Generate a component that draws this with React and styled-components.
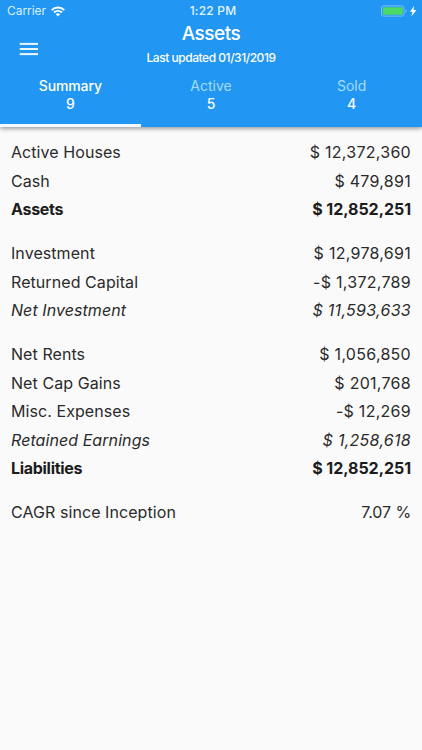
import React from 'react';
import styled, { createGlobalStyle } from 'styled-components';

const GlobalStyle = createGlobalStyle`
  * {
    box-sizing: border-box;
  }

  body {
    margin: 0;
    background-color: #fafafa;
    font-family: Inter, "Liberation Sans", sans-serif;
    color: #212121;
  }
`;

const Screen = styled.div`
  min-height: 750px;
  background-color: #fafafa;
`;

const Header = styled.header`
  display: flex;
  flex-direction: column;
  height: 127px;
  background-color: #2196f3;
  color: #fff;
  box-shadow: 0 1px 4px rgba(0, 0, 0, 0.28), 0 2px 5px rgba(0, 0, 0, 0.18);
`;

const StatusBar = styled.div`
  display: grid;
  grid-template-columns: 1fr auto 1fr;
  align-items: center;
  height: 22px;
  padding: 0 5px 0 7px;
`;

const Carrier = styled.div`
  display: flex;
  align-items: center;
  gap: 5px;
  font-size: 12px;
  line-height: 22px;
  letter-spacing: -0.05px;
  color: #d9f0ff;
`;

const Clock = styled.div`
  padding-left: 2px;
  font-size: 12px;
  font-weight: 500;
  line-height: 22px;
  letter-spacing: 0.2px;
  color: #e3f4ff;
`;

const Battery = styled.div`
  display: flex;
  justify-content: flex-end;
`;

const Toolbar = styled.div`
  display: grid;
  grid-template-columns: 1fr auto 1fr;
  height: 48px;
`;

const MenuButton = styled.button`
  justify-self: start;
  height: 19px;
  margin: 19px 0 0 19px;
  padding: 0;
  border: none;
  background: none;
`;

const Heading = styled.div`
  text-align: center;
`;

const Title = styled.h1`
  margin: 0;
  font-size: 19px;
  font-weight: 500;
  line-height: 24px;
  letter-spacing: -0.5px;
`;

const Subtitle = styled.div`
  font-size: 12px;
  font-weight: 500;
  line-height: 23px;
  letter-spacing: -0.46px;
`;

const Tabs = styled.nav`
  display: grid;
  grid-template-columns: repeat(3, 1fr);
  flex: 1;
`;

const Tab = styled.div`
  padding-top: 7px;
  border-bottom: 3px solid ${props => (props.$active ? '#f1f8fe' : 'transparent')};
  text-align: center;
  font-size: 14px;
  font-weight: 500;
  line-height: 17.5px;
`;

const TabLabel = styled.div`
  color: ${props => (props.$active ? '#fff' : '#a5dcfc')};
  font-weight: ${props => (props.$active ? 500 : 400)};
  letter-spacing: ${props => (props.$active ? '-0.1px' : '0')};
`;

const Content = styled.main`
  padding: 11px 11px 0;
`;

const Section = styled.section`
  margin-bottom: 15.5px;
`;

const Row = styled.div`
  display: flex;
  justify-content: space-between;
  height: 28.5px;
  font-size: 16px;
  line-height: 28.5px;
  color: ${props => (props.$kind === 'total' ? '#1c1c1c' : '#2a2a2a')};
  font-weight: ${props => (props.$kind === 'total' ? 700 : 400)};
  font-style: ${props => (props.$kind === 'subtotal' ? 'italic' : 'normal')};
`;

const RowLabel = styled.span`
  letter-spacing: ${props => (props.$kind === 'total' ? '-0.3px' : '0.07px')};
`;

const RowValue = styled.span`
  letter-spacing: ${props => (props.$kind === 'total' ? '-0.05px' : props.$kind === 'ratio' ? '-0.1px' : '0.28px')};
`;

const tabs = [
  { label: 'Summary', count: 9 },
  { label: 'Active', count: 5 },
  { label: 'Sold', count: 4 },
];

const sections = [
  [
    { label: 'Active Houses', value: '$ 12,372,360' },
    { label: 'Cash', value: '$ 479,891' },
    { label: 'Assets', value: '$ 12,852,251', kind: 'total' },
  ],
  [
    { label: 'Investment', value: '$ 12,978,691' },
    { label: 'Returned Capital', value: '-$ 1,372,789' },
    { label: 'Net Investment', value: '$ 11,593,633', kind: 'subtotal' },
  ],
  [
    { label: 'Net Rents', value: '$ 1,056,850' },
    { label: 'Net Cap Gains', value: '$ 201,768' },
    { label: 'Misc. Expenses', value: '-$ 12,269' },
    { label: 'Retained Earnings', value: '$ 1,258,618', kind: 'subtotal' },
    { label: 'Liabilities', value: '$ 12,852,251', kind: 'total' },
  ],
  [
    { label: 'CAGR since Inception', value: '7.07 %', kind: 'ratio' },
  ],
];

const WifiIcon = () => (
  <svg width="14" height="11" viewBox="0 0 14 11" fill="none" stroke="#fff" strokeWidth="1.9">
    <path d="M0.7 4.1a8.9 8.9 0 0 1 12.6 0" />
    <path d="M3 6.5a5.7 5.7 0 0 1 8 0" />
    <path d="M7 10.5L4.8 8.3a3.1 3.1 0 0 1 4.4 0z" fill="#fff" stroke="none" />
  </svg>
);

const BatteryIcon = () => (
  <svg width="37" height="12" viewBox="0 0 37 12">
    <rect x="1.5" y="0.9" width="22.6" height="10.2" rx="2" fill="none" stroke="#7cc0f8" />
    <rect x="2.8" y="2.2" width="20" height="7.6" rx="0.8" fill="#4cd964" />
    <path d="M25.5 4.2c1.6 0.6 1.6 3 0 3.6z" fill="#7cc0f8" />
    <path d="M34.2 1L29.9 6.8h2.7L31.3 11.4l5.2-6.5h-3z" fill="#fff" />
  </svg>
);

const MenuIcon = () => (
  <svg width="20" height="14" viewBox="0 0 20 14" fill="#e9f7ff">
    <rect x="0.7" y="0.9" width="18.3" height="2" />
    <rect x="0.7" y="6" width="18.3" height="2" />
    <rect x="0.7" y="11.1" width="18.3" height="2" />
  </svg>
);

class App extends React.Component {
  state = { active: 0 };

  renderTabs() {
    return tabs.map((tab, index) => {
      const active = index === this.state.active;
      return (
        <Tab key={tab.label} $active={active} onClick={() => this.setState({ active: index })}>
          <TabLabel $active={active}>{tab.label}</TabLabel>
          <div>{tab.count}</div>
        </Tab>
      );
    });
  }

  renderSections() {
    return sections.map((rows, index) => (
      <Section key={index}>
        {rows.map(row => (
          <Row key={row.label} $kind={row.kind}>
            <RowLabel $kind={row.kind}>{row.label}</RowLabel>
            <RowValue $kind={row.kind}>{row.value}</RowValue>
          </Row>
        ))}
      </Section>
    ));
  }

  render() {
    return (
      <Screen>
        <GlobalStyle />
        <Header>
          <StatusBar>
            <Carrier>Carrier <WifiIcon /></Carrier>
            <Clock>1:22 PM</Clock>
            <Battery><BatteryIcon /></Battery>
          </StatusBar>
          <Toolbar>
            <MenuButton><MenuIcon /></MenuButton>
            <Heading>
              <Title>Assets</Title>
              <Subtitle>Last updated 01/31/2019</Subtitle>
            </Heading>
          </Toolbar>
          <Tabs>{this.renderTabs()}</Tabs>
        </Header>
        <Content>{this.renderSections()}</Content>
      </Screen>
    );
  }
}

export default App;
